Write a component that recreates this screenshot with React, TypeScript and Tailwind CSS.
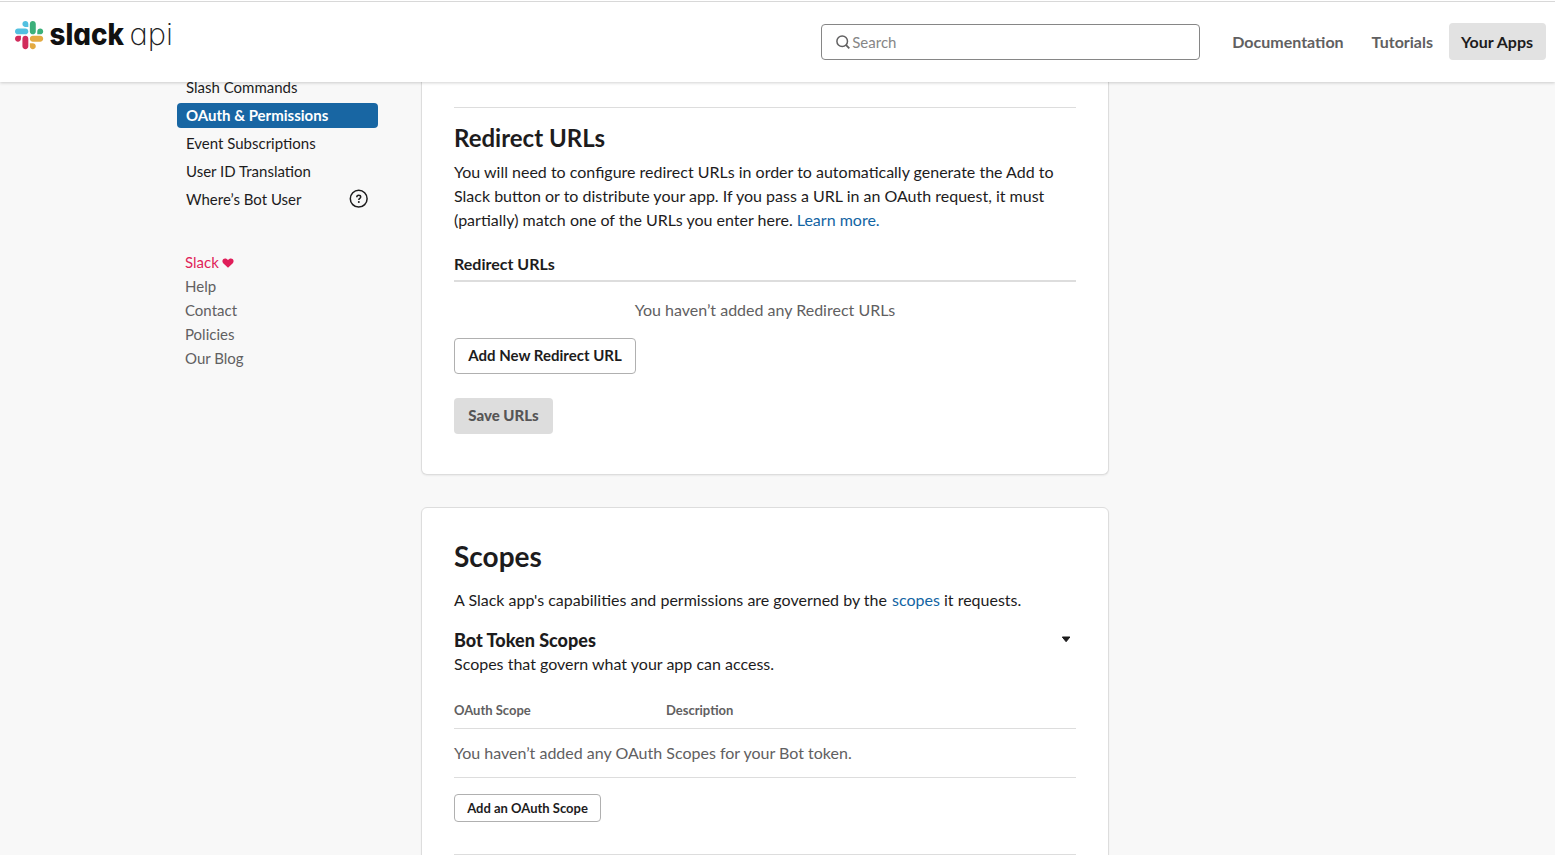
import type { ReactNode } from "react";

function SlackLogo() {
  return (
    <svg width="162" height="40" viewBox="0 0 162 40" className="block overflow-visible" role="img" aria-label="slack api">
      <g transform="translate(1 3) scale(0.2296)">
        <path fill="#d12d5c" d="M25.8 77.6c0 7.1-5.8 12.9-12.9 12.9S0 84.7 0 77.6s5.8-12.9 12.9-12.9h12.9v12.9zm6.5 0c0-7.1 5.8-12.9 12.9-12.9s12.9 5.8 12.9 12.9v32.3c0 7.1-5.8 12.9-12.9 12.9s-12.9-5.8-12.9-12.9V77.6z" />
        <path fill="#52c0e0" d="M45.2 25.8c-7.1 0-12.9-5.8-12.9-12.9S38.1 0 45.2 0s12.9 5.8 12.9 12.9v12.9H45.2zm0 6.5c7.1 0 12.9 5.8 12.9 12.9s-5.8 12.9-12.9 12.9H12.9C5.8 58.1 0 52.3 0 45.2s5.8-12.9 12.9-12.9h32.3z" />
        <path fill="#3bb07a" d="M97 45.2c0-7.1 5.8-12.9 12.9-12.9s12.9 5.8 12.9 12.9-5.8 12.9-12.9 12.9H97V45.2zm-6.5 0c0 7.1-5.8 12.9-12.9 12.9s-12.9-5.8-12.9-12.9V12.9C64.7 5.8 70.5 0 77.6 0s12.9 5.8 12.9 12.9v32.3z" />
        <path fill="#e3aa42" d="M77.6 97c7.1 0 12.9 5.8 12.9 12.9s-5.8 12.9-12.9 12.9-12.9-5.8-12.9-12.9V97h12.900zm0-6.500c-7.100 0-12.900-5.800-12.900-12.900s5.800-12.900 12.900-12.900h32.300c7.100 0 12.900 5.800 12.900 12.900s-5.800 12.900-12.900 12.900H77.600z" />
      </g>
      <text x="35.500" y="26.800" textLength="74.500" lengthAdjust="spacingAndGlyphs" fill="#111" className="font-[Inter] text-[30px] font-extrabold [font-feature-settings:'cv11','ss03']">slack</text>
      <text x="115.500" y="26.800" textLength="43.500" lengthAdjust="spacingAndGlyphs" fill="#222" className="font-[Inter] text-[30px] font-extralight [font-feature-settings:'cv11','ss03']">api</text>
    </svg>
  );
}

function SearchIcon() {
  return (
    <svg width="14" height="14" viewBox="0 0 14 14" fill="none" stroke="#616061" className="block">
      <circle cx="6.200" cy="6.200" r="5.300" strokeWidth="1.500" />
      <path d="M9.900 9.900 13.300 13.300" strokeWidth="1.800" />
    </svg>
  );
}

function HelpIcon() {
  return (
    <svg width="20" height="20" viewBox="0 0 20 20" fill="none" stroke="#1d1c1d" className="-mt-px block">
      <circle cx="9.700" cy="9.700" r="8.400" strokeWidth="1.500" />
      <path d="M7.800 8.200c0-1.200.8-1.900 1.900-1.900s2 .7 2 1.700c0 1.400-1.900 1.500-1.900 3" strokeWidth="1.500" />
      <circle cx="9.800" cy="13" r="1" fill="#1d1c1d" stroke="none" />
    </svg>
  );
}

function Heart() {
  return (
    <svg width="12" height="10" viewBox="0 0 12 10" className="mt-px block">
      <path fill="#e01e5a" d="M6 9.700 1.200 5.200C.2 4.200.1 2.400 1.100 1.300 2.300 0 4.800.1 6 2.100 7.200.1 9.700 0 10.900 1.300c1 1.100.9 2.900-.1 3.900z" />
    </svg>
  );
}

function NavItem({ children, active = false, icon }: { children: ReactNode; active?: boolean; icon?: ReactNode }) {
  return (
    <a
      className={
        active
          ? "flex h-[25px] items-center justify-between rounded bg-[#1866a3] px-[9px] text-[15px] font-bold text-white"
          : "flex h-[25px] items-center justify-between px-[9px] text-[15px] text-[#1d1c1d]"
      }
    >
      {children}
      {icon}
    </a>
  );
}

export default function App() {
  return (
    <div className="h-[855px] w-[1555px] overflow-hidden bg-[#f8f8f8] font-[Lato,sans-serif] text-base text-[#1d1c1d]">
      <header className="relative z-10 flex h-[82px] border-t border-white bg-white shadow-[0_1px_3px_rgba(0,0,0,0.18)]">
        <div className="flex w-full justify-between border-t border-[#d8d8d8]">
          <div className="pt-4 pl-[14px]">
            <SlackLogo />
          </div>
          <div className="flex items-start pt-[21px] pr-[9px]">
            <div className="mt-px flex h-[36px] w-[379px] items-center gap-[2px] rounded border border-[#868686] pl-[14px] text-[15px] text-[#868686]">
              <SearchIcon />
              <span>Search</span>
            </div>
            <nav className="ml-[20px] flex gap-1 font-bold text-[#616061]">
              <a className="flex h-[37px] items-center px-3">Documentation</a>
              <a className="flex h-[37px] items-center px-3">Tutorials</a>
              <a className="flex h-[37px] w-[97px] items-center rounded bg-[#e2e2e2] px-3 whitespace-nowrap text-[#1d1c1d]">Your Apps</a>
            </nav>
          </div>
        </div>
      </header>

      <main className="flex h-[773px] gap-[43px] overflow-hidden pl-[177px]">
        <aside className="w-[201px]">
          <nav className="-mt-[7px] flex flex-col gap-[3px]">
            <NavItem>Slash Commands</NavItem>
            <NavItem active>OAuth &amp; Permissions</NavItem>
            <NavItem>Event Subscriptions</NavItem>
            <NavItem>User ID Translation</NavItem>
            <NavItem icon={<HelpIcon />}>Where’s Bot User</NavItem>
          </nav>
          <div className="mt-[38px] flex flex-col pl-2 text-[15px] leading-6 text-[#616061]">
            <a className="flex items-center gap-[3px] text-[#e01e5a]">
              Slack <Heart />
            </a>
            <a>Help</a>
            <a>Contact</a>
            <a>Policies</a>
            <a>Our Blog</a>
          </div>
        </aside>

        <div className="flex w-[688px] flex-col gap-8">
          <section className="h-[393px] shrink-0 rounded-b-md border border-t-0 border-[#dddddd] bg-white px-8 pt-[25px] shadow-[0_1px_2px_rgba(0,0,0,0.06)]">
            <div className="border-t border-[#dddddd] pt-[14px]">
              <h2 className="text-[24px] leading-8 font-bold">Redirect URLs</h2>
              <p className="mt-[6px] leading-6 whitespace-nowrap">
                You will need to configure redirect URLs in order to automatically generate the Add to
                <br />
                Slack button or to distribute your app. If you pass a URL in an OAuth request, it must
                <br />
                (partially) match one of the URLs you enter here. <a className="text-[#1264a3]">Learn more.</a>
              </p>
              <h3 className="mt-5 border-b-2 border-[#dddddd] pb-1 leading-6 font-bold">Redirect URLs</h3>
              <p className="mt-4 text-center leading-6 text-[#616061]">You haven’t added any Redirect URLs</p>
              <button className="mt-4 flex h-[36px] w-[182px] items-center justify-center rounded border border-[#b0b0b0] pb-[2px] text-[15px] font-bold">
                Add New Redirect URL
              </button>
              <button className="mt-6 flex h-[36px] w-[99px] items-center justify-center rounded bg-[#dddddd] pb-[2px] text-[15px] font-black text-[#565556]">
                Save URLs
              </button>
            </div>
          </section>

          <section className="h-[400px] shrink-0 rounded-md border border-[#dddddd] bg-white px-8 pt-[28px] shadow-[0_1px_2px_rgba(0,0,0,0.06)]">
            <h1 className="text-[28px] leading-10 font-bold">Scopes</h1>
            <p className="mt-3 leading-6">
              A Slack app's capabilities and permissions are governed by the <a className="ml-px text-[#1264a3]">scopes</a> it requests.
            </p>
            <div className="mt-4 flex items-center justify-between pr-[5px]">
              <h2 className="text-[18px] leading-6 font-black">Bot Token Scopes</h2>
              <svg width="10" height="7" viewBox="0 0 10 7" className="mb-[2px] block">
                <path d="M1.300 1h7.600L5.100 5.700z" fill="#1d1c1d" stroke="#1d1c1d" strokeLinejoin="round" />
              </svg>
            </div>
            <p className="leading-6">Scopes that govern what your app can access.</p>
            <div className="mt-6 grid h-[29px] grid-cols-[212px_1fr] border-b border-[#dddddd] text-[13px] leading-5 font-bold text-[#616061]">
              <span>OAuth Scope</span>
              <span>Description</span>
            </div>
            <p className="flex h-[49px] items-center border-b border-[#dddddd] text-[#616061]">
              You haven’t added any OAuth Scopes for your Bot token.
            </p>
            <button className="mt-4 flex h-[28px] w-[147px] items-center justify-center rounded border border-[#b0b0b0] pt-px text-[13px] font-bold">
              Add an OAuth Scope
            </button>
            <div className="mt-8 border-t border-[#dddddd]" />
          </section>
        </div>
      </main>
    </div>
  );
}
